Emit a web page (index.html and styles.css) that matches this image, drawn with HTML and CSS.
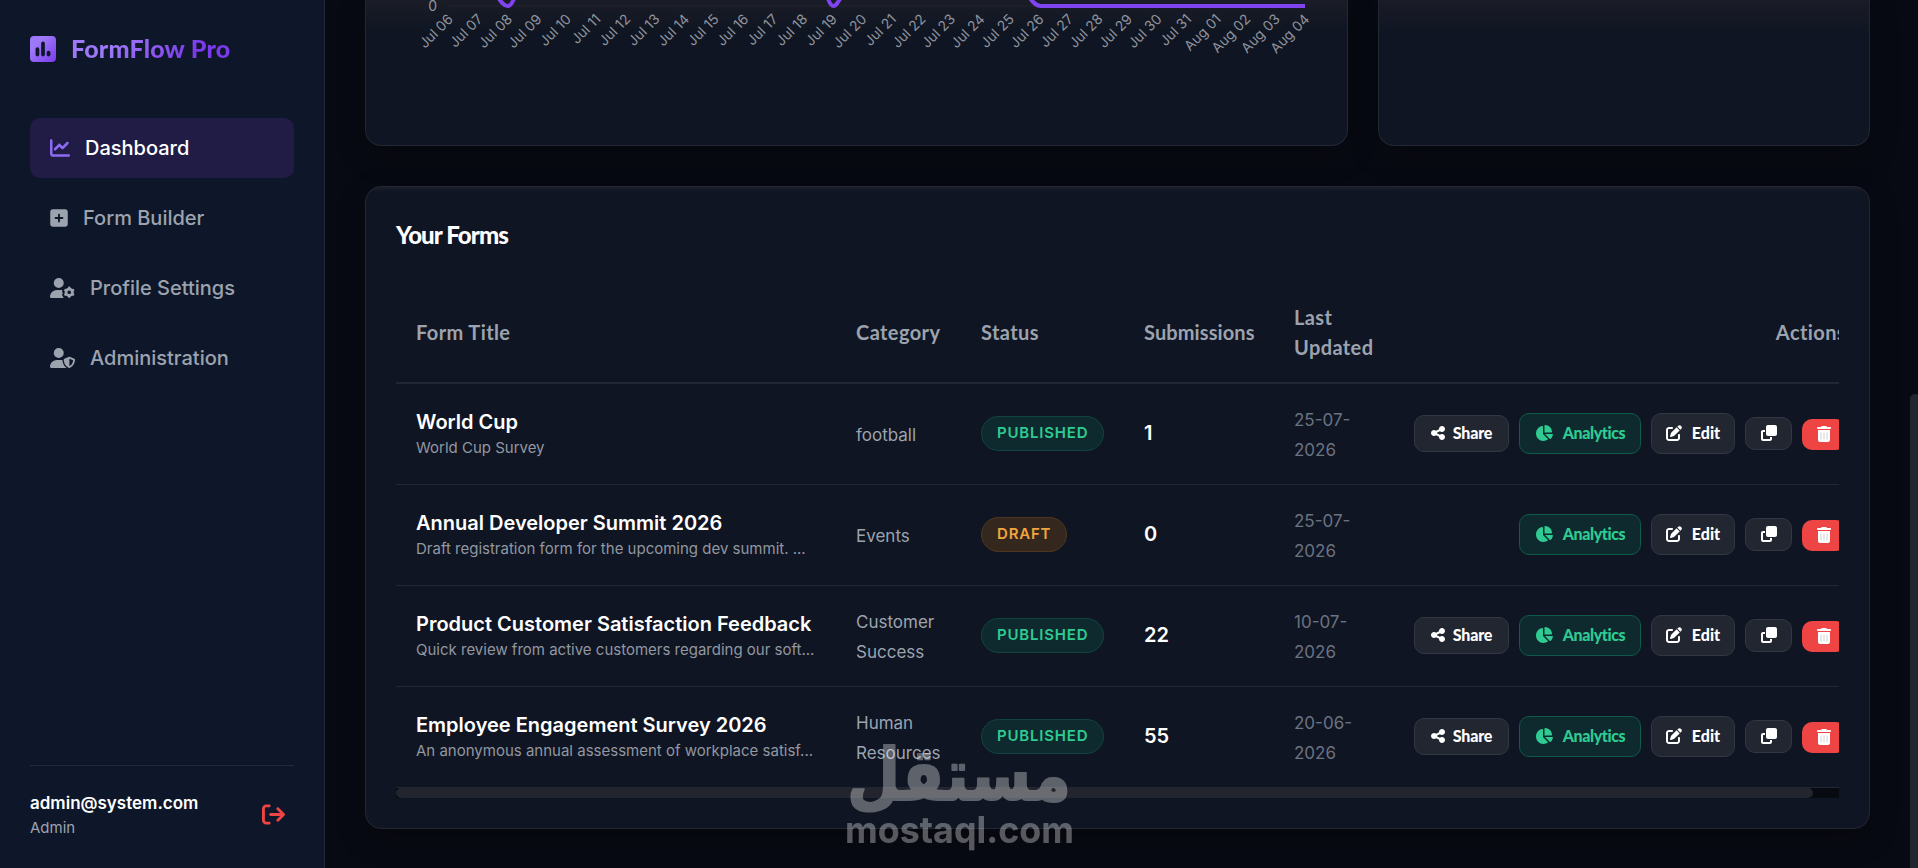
FILE: index.html
```html
<!DOCTYPE html>
<html lang="en">
<head>
<meta charset="UTF-8">
<meta name="viewport" content="width=device-width, initial-scale=1.0">
<title>FormFlow Pro - Dashboard</title>
<link rel="stylesheet" href="styles.css">
</head>
<body>

<!-- Icons -->
<svg class="sprite">
  <linearGradient id="logo-fill" x1="0" y1="0" x2="1" y2="1">
    <stop offset="0.3" stop-color="#9d78f8"/>
    <stop offset="1" stop-color="#7c3aed"/>
  </linearGradient>
  <symbol id="i-logo" viewBox="0 32 448 448"><path fill="url(#logo-fill)" d="M64 32C28.7 32 0 60.7 0 96V416c0 35.3 28.7 64 64 64H384c35.3 0 64-28.7 64-64V96c0-35.3-28.7-64-64-64H64zm64 192c17.7 0 32 14.3 32 32v96c0 17.7-14.3 32-32 32s-32-14.3-32-32V256c0-17.7 14.3-32 32-32zm64-64c0-17.7 14.3-32 32-32s32 14.3 32 32V352c0 17.7-14.3 32-32 32s-32-14.3-32-32V160zM320 288c17.7 0 32 14.3 32 32v32c0 17.7-14.3 32-32 32s-32-14.3-32-32V320c0-17.7 14.3-32 32-32z"/></symbol>
  <symbol id="i-chart" viewBox="0 0 512 512"><path d="M64 64c0-17.7-14.3-32-32-32S0 46.3 0 64V400c0 44.2 35.8 80 80 80H480c17.7 0 32-14.3 32-32s-14.3-32-32-32H80c-8.8 0-16-7.2-16-16V64zm406.6 86.6c12.5-12.5 12.5-32.8 0-45.3s-32.8-12.5-45.3 0L320 210.7l-57.4-57.4c-12.5-12.5-32.8-12.5-45.3 0l-112 112c-12.5 12.5-12.5 32.8 0 45.3s32.8 12.5 45.3 0L240 221.3l57.4 57.4c12.5 12.5 32.8 12.5 45.3 0l128-128z"/></symbol>
  <symbol id="i-plus" viewBox="0 0 448 512"><path d="M64 32C28.7 32 0 60.7 0 96V416c0 35.3 28.7 64 64 64H384c35.3 0 64-28.7 64-64V96c0-35.3-28.7-64-64-64H64zM200 344V280H136c-13.3 0-24-10.7-24-24s10.7-24 24-24h64V168c0-13.3 10.7-24 24-24s24 10.7 24 24v64h64c13.3 0 24 10.7 24 24s-10.7 24-24 24H248v64c0 13.3-10.7 24-24 24s-24-10.7-24-24z"/></symbol>
  <symbol id="i-gear" viewBox="0 0 640 512"><path d="M224 0a128 128 0 1 1 0 256A128 128 0 1 1 224 0zM178.3 304h91.4c18 0 35 2.500 51 7.500c-12 18-16 30-8 50c6 13 10 20 20 30c-22 14-28 30-20 52c10 28 22 50 42 69H29.700C13.300 512 0 498.700 0 482.300C0 383.800 79.800 304 178.300 304z"/><g fill="none" stroke="currentColor"><circle cx="492" cy="365" r="82" stroke-width="70"/><path stroke-width="68" stroke-linecap="round" d="M492 272v-18M492 458v18M411 318l-15-9M573 412l15 9M411 412l-15 9M573 318l15-9"/></g></symbol>
  <symbol id="i-shield" viewBox="0 0 640 512"><path d="M224 256A128 128 0 1 0 224 0a128 128 0 1 0 0 256zm-45.700 48C79.800 304 0 383.800 0 482.300C0 498.700 13.300 512 29.700 512H418.300c1.800 0 3.500-.2 5.300-.5c-76.300-55.100-99.800-141-103.100-200.200c-16.100-4.800-33.100-7.300-50.700-7.300H178.300zm308.800-78.300l-120 48C358 277.400 352 286.200 352 296c0 63.300 25.900 168.800 134.800 214.200c5.900 2.500 12.600 2.500 18.500 0C614.100 464.800 640 359.300 640 296c0-9.800-6-18.600-15.100-22.300l-120-48c-5.700-2.300-12.100-2.300-17.800 0zM591.400 312c-3.900 50.700-27.200 116.700-95.400 149.700V273.800L591.400 312z"/></symbol>
  <symbol id="i-logout" viewBox="0 0 512 512"><path d="M502.600 278.600c12.500-12.500 12.500-32.800 0-45.300l-128-128c-12.500-12.500-32.800-12.500-45.300 0s-12.500 32.800 0 45.300L402.700 224 192 224c-17.700 0-32 14.300-32 32s14.300 32 32 32l210.700 0-73.400 73.400c-12.500 12.500-12.500 32.800 0 45.300s32.800 12.500 45.300 0l128-128zM160 96c17.700 0 32-14.300 32-32s-14.300-32-32-32L96 32C43 32 0 75 0 128L0 384c0 53 43 96 96 96l64 0c17.700 0 32-14.300 32-32s-14.300-32-32-32l-64 0c-17.700 0-32-14.300-32-32l0-256c0-17.700 14.300-32 32-32l64 0z"/></symbol>
  <symbol id="i-share" viewBox="0 0 448 512"><path d="M352 224c53 0 96-43 96-96s-43-96-96-96s-96 43-96 96c0 4 .2 8 .7 11.900l-94.100 47C145.400 170.200 121.900 160 96 160c-53 0-96 43-96 96s43 96 96 96c25.900 0 49.400-10.200 66.600-26.900l94.100 47c-.5 3.900-.7 7.800-.7 11.900c0 53 43 96 96 96s96-43 96-96s-43-96-96-96c-25.900 0-49.400 10.200-66.600 26.900l-94.100-47c.5-3.900 .7-7.800 .7-11.900s-.2-8-.7-11.900l94.100-47C302.600 213.800 326.100 224 352 224z"/></symbol>
  <symbol id="i-pie" viewBox="0 0 576 512"><path d="M304 240V16.600c0-9 7-16.600 16-16.600C443.700 0 544 100.300 544 224c0 9-7.600 16-16.600 16H304zM32 272C32 150.700 122.100 50.300 239 34.300c9.200-1.300 17 6.100 17 15.400V288L412.500 444.500c6.700 6.700 6.200 17.700-1.500 23.100C371.800 495.600 323.800 512 272 512C139.500 512 32 404.600 32 272zm526.400 16c9.300 0 16.600 7.800 15.400 17c-7.700 55.900-34.600 105.600-73.900 142.300c-6 5.600-15.400 5.200-21.200-.7L320 288H558.400z"/></symbol>
  <symbol id="i-edit" viewBox="0 0 512 512"><path d="M471.600 21.700c-21.900-21.900-57.300-21.900-79.200 0L362.300 51.700l97.900 97.900 30.100-30.100c21.900-21.900 21.900-57.300 0-79.200L471.600 21.700zm-299.200 220c-6.100 6.100-10.800 13.600-13.500 21.900l-29.600 88.800c-2.900 8.600-.6 18.100 5.800 24.600s15.900 8.700 24.600 5.800l88.800-29.600c8.200-2.700 15.700-7.400 21.900-13.500L437.700 172.300 339.700 74.300 172.400 241.700zM96 64C43 64 0 107 0 160V416c0 53 43 96 96 96H352c53 0 96-43 96-96V320c0-17.700-14.300-32-32-32s-32 14.300-32 32v96c0 17.700-14.300 32-32 32H96c-17.700 0-32-14.300-32-32V160c0-17.700 14.300-32 32-32h96c17.700 0 32-14.300 32-32s-14.300-32-32-32H96z"/></symbol>
  <symbol id="i-clone" viewBox="0 0 512 512"><path d="M288 448H64V224h64V160H64c-35.300 0-64 28.700-64 64V448c0 35.300 28.700 64 64 64H288c35.300 0 64-28.700 64-64V384H288v64zm-64-96H448c35.300 0 64-28.700 64-64V64c0-35.300-28.700-64-64-64H224c-35.300 0-64 28.700-64 64V288c0 35.300 28.700 64 64 64z"/></symbol>
  <symbol id="i-trash" viewBox="0 0 448 512"><path d="M135.200 17.700L128 32H32C14.300 32 0 46.300 0 64S14.300 96 32 96H416c17.700 0 32-14.300 32-32s-14.300-32-32-32H320l-7.200-14.300C307.400 6.800 296.300 0 284.200 0H163.800c-12.100 0-23.200 6.800-28.600 17.700zM416 128H32V448c0 35.300 28.700 64 64 64H352c35.300 0 64-28.700 64-64V128z"/><path class="trash-lines" d="M128 208v224M224 208v224M320 208v224"/></symbol>
</svg>

<div class="app">
  <aside class="sidebar">
    <div class="logo">
      <svg class="logo-icon"><use href="#i-logo"/></svg>
      <span>FormFlow Pro</span>
    </div>
    <nav class="menu">
      <a class="menu-item active"><svg class="icon w20"><use href="#i-chart"/></svg>Dashboard</a>
      <a class="menu-item"><svg class="icon w18"><use href="#i-plus"/></svg>Form Builder</a>
      <a class="menu-item"><svg class="icon w25"><use href="#i-gear"/></svg>Profile Settings</a>
      <a class="menu-item"><svg class="icon w25"><use href="#i-shield"/></svg>Administration</a>
    </nav>
    <div class="user">
      <div>
        <div class="user-email">admin@system.com</div>
        <div class="user-role">Admin</div>
      </div>
      <svg class="logout"><use href="#i-logout"/></svg>
    </div>
  </aside>

  <main class="main">
    <div class="charts">
      <div class="card chart-card">
        <svg class="chart" id="chart" viewBox="0 0 981 144">
          <path class="grid-line" d="M83 6H939"/>
          <path class="line" d="M131 -4C135 2 138 6 141.700 6C145 6 147 2 149 -4M461 -4C463 2 465 6 467.500 6C470 6 472 2 476 -4M660 -8C665 0 669 6 675 6H939"/>
          <text class="tick" x="71" y="11" text-anchor="end">0</text>
        </svg>
      </div>
      <div class="card chart-card"></div>
    </div>

    <div class="card forms-card">
      <h3>Your Forms</h3>
      <div class="table-wrap">
        <table>
          <colgroup>
            <col class="c-title"><col class="c-category"><col class="c-status"><col class="c-subs"><col class="c-date"><col class="c-actions">
          </colgroup>
          <thead>
            <tr>
              <th>Form Title</th>
              <th>Category</th>
              <th>Status</th>
              <th class="h-subs">Submissions</th>
              <th>Last Updated</th>
              <th class="right">Actions</th>
            </tr>
          </thead>
          <tbody>
            <tr>
              <td><div class="form-name">World Cup</div><div class="form-desc">World Cup Survey</div></td>
              <td><span class="category">football</span></td>
              <td><span class="badge published">PUBLISHED</span></td>
              <td class="count">1</td>
              <td><span class="date">25-07-2026</span></td>
              <td>
                <div class="actions">
                  <button class="btn share"><svg><use href="#i-share"/></svg>Share</button>
                  <button class="btn analytics"><svg><use href="#i-pie"/></svg>Analytics</button>
                  <button class="btn edit"><svg><use href="#i-edit"/></svg>Edit</button>
                  <button class="btn copy"><svg><use href="#i-clone"/></svg></button>
                  <button class="btn delete"><svg><use href="#i-trash"/></svg></button>
                </div>
              </td>
            </tr>
            <tr>
              <td><div class="form-name">Annual Developer Summit 2026</div><div class="form-desc">Draft registration form for the upcoming dev summit. ...</div></td>
              <td><span class="category">Events</span></td>
              <td><span class="badge draft">DRAFT</span></td>
              <td class="count">0</td>
              <td><span class="date">25-07-2026</span></td>
              <td>
                <div class="actions">
                  <button class="btn analytics"><svg><use href="#i-pie"/></svg>Analytics</button>
                  <button class="btn edit"><svg><use href="#i-edit"/></svg>Edit</button>
                  <button class="btn copy"><svg><use href="#i-clone"/></svg></button>
                  <button class="btn delete"><svg><use href="#i-trash"/></svg></button>
                </div>
              </td>
            </tr>
            <tr>
              <td><div class="form-name">Product Customer Satisfaction Feedback</div><div class="form-desc">Quick review from active customers regarding our soft...</div></td>
              <td><span class="category">Customer Success</span></td>
              <td><span class="badge published">PUBLISHED</span></td>
              <td class="count">22</td>
              <td><span class="date">10-07-2026</span></td>
              <td>
                <div class="actions">
                  <button class="btn share"><svg><use href="#i-share"/></svg>Share</button>
                  <button class="btn analytics"><svg><use href="#i-pie"/></svg>Analytics</button>
                  <button class="btn edit"><svg><use href="#i-edit"/></svg>Edit</button>
                  <button class="btn copy"><svg><use href="#i-clone"/></svg></button>
                  <button class="btn delete"><svg><use href="#i-trash"/></svg></button>
                </div>
              </td>
            </tr>
            <tr>
              <td><div class="form-name">Employee Engagement Survey 2026</div><div class="form-desc">An anonymous annual assessment of workplace satisf...</div></td>
              <td><span class="category">Human Resources</span></td>
              <td><span class="badge published">PUBLISHED</span></td>
              <td class="count">55</td>
              <td><span class="date">20-06-2026</span></td>
              <td>
                <div class="actions">
                  <button class="btn share"><svg><use href="#i-share"/></svg>Share</button>
                  <button class="btn analytics"><svg><use href="#i-pie"/></svg>Analytics</button>
                  <button class="btn edit"><svg><use href="#i-edit"/></svg>Edit</button>
                  <button class="btn copy"><svg><use href="#i-clone"/></svg></button>
                  <button class="btn delete"><svg><use href="#i-trash"/></svg></button>
                </div>
              </td>
            </tr>
          </tbody>
        </table>
      </div>
      <div class="scroll-x"><div class="scroll-x-thumb"></div></div>
    </div>
  </main>
</div>

<div class="scroll-y"></div>

<svg class="watermark" viewBox="0 0 240 120">
  <text class="wm-arabic" x="7" y="60" direction="ltr" textLength="224" lengthAdjust="spacingAndGlyphs">مستقل</text>
  <text class="wm-latin" x="5" y="103" textLength="229" lengthAdjust="spacingAndGlyphs">mostaql.com</text>
</svg>

<script>
// Date labels under the chart, one per day
var chart = document.getElementById("chart");
var start = new Date(2026, 6, 6);
for (var i = 0; i < 30; i++) {
  var d = new Date(start.getFullYear(), start.getMonth(), start.getDate() + i);
  var label = document.createElementNS("http://www.w3.org/2000/svg", "text");
  label.textContent = (d.getMonth() === 6 ? "Jul " : "Aug ") + String(d.getDate()).padStart(2, "0");
  label.setAttribute("class", "tick");
  label.setAttribute("text-anchor", "end");
  label.setAttribute("transform", "translate(" + (88 + i * 29.53) + " 20) rotate(-45)");
  chart.appendChild(label);
}
</script>

</body>
</html>
```
FILE: styles.css
```css
* {
  box-sizing: border-box;
}

body {
  margin: 0;
  height: 868px;
  overflow: hidden;
  background-color: #080a13;
  color: #ffffff;
  font-family: Inter, sans-serif;
  font-size: 20px;
  line-height: 30px;
}

.sprite {
  position: absolute;
  width: 0;
  height: 0;
}

svg {
  fill: currentColor;
  flex-shrink: 0;
}

.app {
  display: flex;
  height: 868px;
}

/* Sidebar */
.sidebar {
  width: 325px;
  padding: 30px;
  background-color: #0e1729;
  border-right: 1px solid #232a39;
  display: flex;
  flex-direction: column;
}

.logo {
  display: flex;
  align-items: center;
  gap: 15px;
  height: 38px;
  margin-bottom: 50px;
  font-family: Lato, sans-serif;
  font-size: 25px;
  font-weight: 900;
  letter-spacing: 0.2px;
}

.logo span {
  margin-bottom: 2px;
  background: linear-gradient(135deg, #9d78f8 30%, #7c3aed 75%);
  -webkit-background-clip: text;
  background-clip: text;
  color: transparent;
}

.logo-icon {
  width: 26px;
  height: 26px;
}

.menu {
  display: flex;
  flex-direction: column;
  gap: 10px;
}

.menu-item {
  display: flex;
  align-items: center;
  gap: 15px;
  height: 60px;
  padding: 0 20px;
  border-radius: 10px;
  color: #9ca3af;
  font-weight: 500;
}

.menu-item.active {
  background-color: #201c46;
  color: #ffffff;
}

.menu-item.active .icon {
  color: #8b6cf2;
}

.icon {
  height: 20px;
}

.w18 {
  width: 18px;
}

.w20 {
  width: 20px;
}

.w25 {
  width: 25px;
}

.user {
  display: flex;
  justify-content: space-between;
  align-items: center;
  margin-top: auto;
  height: 73px;
  padding: 25px 9px 0 0;
  border-top: 1px solid #222a3a;
}

.user-email {
  font-size: 17px;
  font-weight: 600;
  line-height: 26px;
}

.user-role {
  font-size: 15px;
  line-height: 23px;
  color: #9ca3af;
}

.logout {
  width: 23px;
  height: 23px;
  color: #ef4444;
}

/* Main */
.main {
  flex: 1;
  min-width: 0;
  padding: 0 48px 0 40px;
}

.card {
  background-color: #0f1522;
  border: 1px solid #222732;
  border-radius: 16px;
  box-shadow: 0 10px 30px rgba(0, 0, 0, 0.22);
}

.charts {
  display: grid;
  grid-template-columns: 2fr 1fr;
  gap: 30px;
  margin-bottom: 40px;
}

.chart-card {
  height: 146px;
  border-top: none;
  border-radius: 0 0 16px 16px;
  background-image: linear-gradient(#1a1c27, #14171f00 32px);
}

.chart {
  display: block;
  width: 981px;
  height: 144px;
}

.tick {
  font-family: Inter, sans-serif;
  font-size: 14px;
  fill: #8e939d;
}

.grid-line {
  stroke: #22242d;
  stroke-width: 1;
}

.line {
  fill: none;
  stroke: #8044ef;
  stroke-width: 4;
}

.forms-card {
  height: 643px;
  padding: 30px;
  background-image: linear-gradient(#1c1f2b, #0f152200 5px);
}

.forms-card h3 {
  margin: 0 0 30px;
  font-family: Lato, sans-serif;
  font-size: 24px;
  font-weight: 900;
  letter-spacing: -0.9px;
  line-height: 35px;
}

.table-wrap {
  overflow: hidden;
}

table {
  width: 1470px;
  table-layout: fixed;
  border-collapse: separate;
  border-spacing: 0;
}

.c-title {
  width: 440px;
}

.c-category {
  width: 125px;
}

.c-status {
  width: 163px;
}

.c-subs {
  width: 150px;
}

.c-date {
  width: 120px;
}

.c-actions {
  width: 472px;
}

th {
  height: 102px;
  padding: 20px;
  text-align: left;
  font-family: Lato, sans-serif;
  font-weight: 700;
  letter-spacing: 0.4px;
  color: #9ca3af;
  border-bottom: 2px solid #222733;
}

th.h-subs {
  letter-spacing: 0.1px;
}

th.right {
  text-align: right;
}

td {
  height: 101px;
  padding: 0 20px 2px;
  border-bottom: 1px solid #222733;
}

.form-name {
  font-weight: 600;
  white-space: nowrap;
}

.form-desc {
  font-size: 15px;
  line-height: 22px;
  color: #9297a1;
  white-space: nowrap;
}

.category,
.date {
  display: block;
  padding-top: 4px;
  font-size: 17px;
  color: #9ca3af;
}

.date {
  color: #6b7280;
}

.badge {
  display: inline-flex;
  align-items: center;
  height: 35px;
  padding: 0 15px;
  border: 1px solid;
  border-radius: 18px;
  font-size: 15px;
  font-weight: 600;
  letter-spacing: 0.8px;
  vertical-align: middle;
}

.published {
  background-color: #0e2a2e;
  border-color: #10463f;
  color: #2fcb92;
}

.draft {
  background-color: #34281e;
  border-color: #4e371e;
  color: #f0a63c;
}

.count {
  font-weight: 600;
}

.actions {
  display: flex;
  justify-content: flex-end;
  align-items: center;
  gap: 10px;
}

.btn {
  display: flex;
  align-items: center;
  justify-content: center;
  gap: 10px;
  padding: 0 0 1px;
  border: 1px solid #333743;
  border-radius: 10px;
  background-color: #212631;
  color: #ffffff;
  font-family: Lato, sans-serif;
  font-size: 16px;
  font-weight: 900;
}

.btn svg {
  width: 16px;
  height: 16px;
}

.share {
  width: 95px;
  height: 37px;
  gap: 8px;
  letter-spacing: -0.2px;
}

.share svg {
  width: 14px;
}

.analytics {
  width: 122px;
  height: 41px;
  background-color: #0e2a2e;
  border-color: #0f5a49;
  color: #2fcb92;
  letter-spacing: -0.4px;
}

.analytics svg {
  width: 18px;
}

.edit {
  width: 84px;
  height: 41px;
}

.copy {
  width: 47px;
  height: 33px;
}

.delete {
  width: 44px;
  height: 31px;
  margin-top: 2px;
  border: none;
  background-color: #ef4444;
}

.trash-lines {
  stroke: #c9c9cc;
  stroke-width: 28;
}

/* Scrollbars */
.scroll-x {
  height: 10px;
  background-color: #080a12;
}

.scroll-x-thumb {
  width: 1417px;
  height: 10px;
  border-radius: 5px;
  background-color: #22252e;
}

.scroll-y {
  position: fixed;
  top: 394px;
  right: -2px;
  bottom: -10px;
  width: 10px;
  border-radius: 5px;
  background-color: #22252e;
}

.watermark {
  position: fixed;
  left: 840px;
  top: 740px;
  width: 240px;
  height: 120px;
  opacity: 0.33;
  fill: #ffffff;
}

.wm-arabic {
  font-family: "DejaVu Sans", sans-serif;
  font-size: 72px;
  font-weight: 700;
  stroke: #ffffff;
  stroke-width: 2;
  stroke-linejoin: round;
}

.wm-latin {
  font-family: Inter, sans-serif;
  font-size: 37px;
  font-weight: 700;
}
```
